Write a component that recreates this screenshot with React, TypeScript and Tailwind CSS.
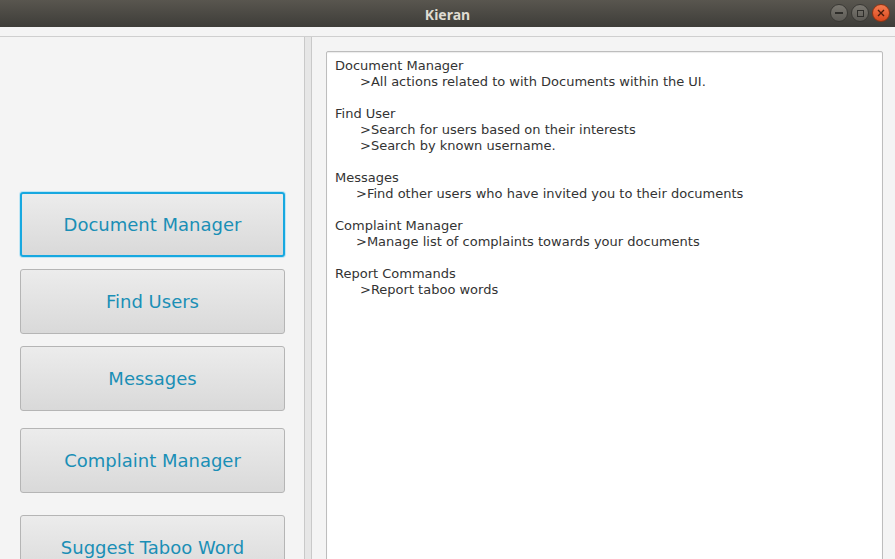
const font = { fontFamily: '"DejaVu Sans", "Noto Sans", sans-serif' }

const BUTTONS = [
  { label: 'Document Manager', mt: 'mt-[155px]', focused: true },
  { label: 'Find Users', mt: 'mt-[12px]' },
  { label: 'Messages', mt: 'mt-[12px]' },
  { label: 'Complaint Manager', mt: 'mt-[17px]' },
  { label: 'Suggest Taboo Word', mt: 'mt-[22px]' },
]

const HELP = [
  { title: 'Document Manager', lines: [{ text: '>All actions related to with Documents within the UI.', pl: 'pl-[25px]' }] },
  {
    title: 'Find User',
    lines: [
      { text: '>Search for users based on their interests', pl: 'pl-[25px]' },
      { text: '>Search by known username.', pl: 'pl-[25px]' },
    ],
  },
  { title: 'Messages', lines: [{ text: '>Find other users who have invited you to their documents', pl: 'pl-[21px]' }] },
  { title: 'Complaint Manager', lines: [{ text: '>Manage list of complaints towards your documents', pl: 'pl-[21px]' }] },
  { title: 'Report Commands', lines: [{ text: '>Report taboo words', pl: 'pl-[25px]' }] },
]

function WindowButtons() {
  return (
    <div className="absolute right-[5px] top-[4px] flex gap-[3px]">
      <div className="w-[18px] h-[18px] rounded-full bg-gradient-to-b from-[#7a7770] to-[#5c5a55] border border-[#3a3935] flex items-center justify-center">
        <div className="w-[8px] h-[1.5px] bg-[#2e2d2a]" />
      </div>
      <div className="w-[18px] h-[18px] rounded-full bg-gradient-to-b from-[#7a7770] to-[#5c5a55] border border-[#3a3935] flex items-center justify-center">
        <div className="w-[7px] h-[7px] border border-[#2e2d2a]" />
      </div>
      <div className="w-[18px] h-[18px] rounded-full bg-gradient-to-b from-[#f47b4e] to-[#d9471b] border border-[#8f3414] flex items-center justify-center">
        <svg width="8" height="8" viewBox="0 0 8 8">
          <path d="M1 1L7 7M7 1L1 7" stroke="#4a1a0a" strokeWidth="1.4" />
        </svg>
      </div>
    </div>
  )
}

export default function App() {
  return (
    <div className="w-[895px] h-[559px] overflow-hidden bg-[#f4f4f4] flex flex-col" style={font}>
      {/* title bar */}
      <div className="relative h-[27px] shrink-0 bg-gradient-to-b from-[#59564f] to-[#3e3d39] flex items-center justify-center">
        <span className="text-[14px] font-bold text-[#dfdbd2] pt-[1px]" style={{ fontFamily: '"Noto Sans", "DejaVu Sans", sans-serif' }}>
          Kieran
        </span>
        <WindowButtons />
      </div>

      <div className="h-[10px] shrink-0 bg-[#f4f4f4] border-b border-[#cfcfcf]" />

      <div className="flex flex-1 min-h-0">
        {/* left pane */}
        <div className="w-[304px] shrink-0 flex flex-col items-start pl-[20px]">
          {BUTTONS.map(b => (
            <button
              key={b.label}
              className={
                'w-[265px] h-[65px] shrink-0 rounded-[3px] bg-gradient-to-b from-[#ececec] to-[#d9d9d9] text-[18px] text-[#1a8fb6] flex items-center justify-center ' +
                b.mt +
                (b.focused
                  ? ' border-2 border-[#17a8e0] shadow-[0_0_0_1px_#bfe6f5]'
                  : ' border border-[#b5b5b5]')
              }
            >
              {b.label}
            </button>
          ))}
        </div>

        {/* divider */}
        <div className="w-[8px] shrink-0 border-l border-r border-[#c9c9c9] bg-[#e6e6e6]" />

        {/* right pane */}
        <div className="flex-1 pl-[14px] pr-[12px] pt-[14px]">
          <div className="h-[600px] bg-white border border-[#bdbdbd] rounded-[2px] shadow-[inset_0_1px_1px_rgba(0,0,0,0.08)] px-[8px] pt-[6px] text-[13px] leading-[16px] text-[#333333]">
            {HELP.map(h => (
              <div key={h.title} className="mb-[16px]">
                <div>{h.title}</div>
                {h.lines.map(l => (
                  <div key={l.text} className={l.pl}>
                    {l.text}
                  </div>
                ))}
              </div>
            ))}
          </div>
        </div>
      </div>
    </div>
  )
}
